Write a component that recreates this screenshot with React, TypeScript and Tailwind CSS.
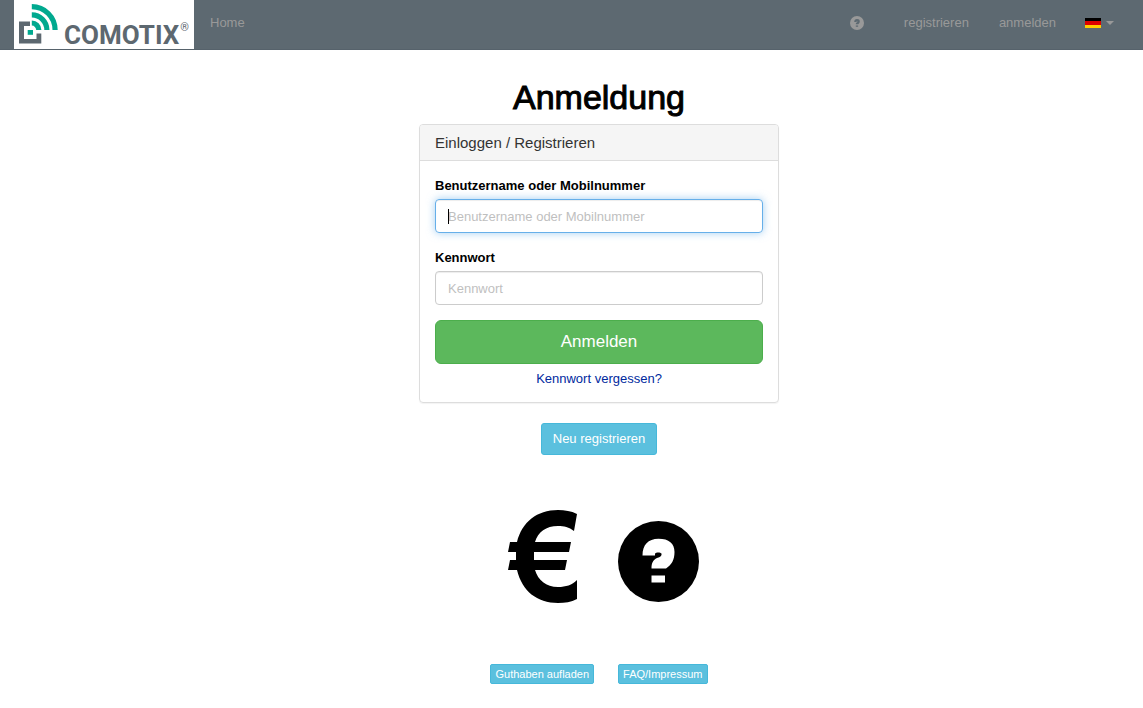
import type { ReactNode } from 'react';

function QuestionIcon({ className, mark }: { className: string; mark: string }) {
  return (
    <svg viewBox="0 0 81 81" className={className} aria-hidden="true">
      <circle cx="40.5" cy="40.5" r="40.5" fill="currentColor" />
      <path
        fill={mark}
        d="M24.500 34.500C24.500 24 30 17.800 40.500 17.800C51 17.800 56.500 22.500 56.500 31C56.500 39 53.500 44 48 47.500H33.500C33.500 42 35 39 39 37C42.500 36 44 34.500 43.500 32.500C42.500 31 38 31 37 32.500V34.500ZM33.500 54.500H47V61.500H33.500Z"
      />
    </svg>
  );
}

function EuroIcon() {
  return (
    <svg viewBox="0 0 69 93" className="h-[93px] w-[69px]" aria-hidden="true">
      <path d="M69 4L66 21C61 17 56 16 50 16C38 16 30 22 27 32H63L61 42H26V50H59L57 60H27C30 70 38 77 50 77C58 77 64 75 69 70V89C63 92 57 93 50 93C29 93 14 81 9 60H0L2 50H8V42H0L2 32H9C14 12 29 0 50 0C57 0 63 1 69 4Z" />
    </svg>
  );
}

function LogoMark() {
  return (
    <svg viewBox="0 0 40 40" className="h-10 w-10 shrink-0" aria-hidden="true">
      <path fill="#5d6870" d="M0 17.500H11V22H5V35H17.500V29.500H22.300V39.500H0Z" />
      <path fill="#00a98f" d="M8.700 26H14V30.800H8.700Z" />
      <g fill="none" stroke="#00a98f" strokeWidth="5.200">
        <path d="M12.800 2.700A23.300 23.300 0 0 1 36.100 26" />
        <path d="M12.800 10.900A15.100 15.100 0 0 1 27.900 26" />
        <path d="M12.800 19A7 7 0 0 1 19.800 26" />
      </g>
    </svg>
  );
}

function NavLink({ children }: { children: ReactNode }) {
  return (
    <a href="#" className="px-[15px] text-[#999]">
      {children}
    </a>
  );
}

const fieldClass =
  'block h-[34px] w-full rounded border px-3 text-[13px] outline-none placeholder:text-[#bfbfbf]';

export default function App() {
  return (
    <div className="min-h-screen bg-white font-['Liberation_Sans',Arial,sans-serif] text-[13px] leading-[18px] text-black">
      <nav className="flex h-[50px] items-start border-b border-[#56626b] bg-[#5d6971] pr-[14px] pl-[14px]">
        <a href="#" aria-label="Comotix" className="flex h-[49px] w-[180px] items-start bg-white pt-1 pl-[5px]">
          <LogoMark />
          <span className="mt-[15px] ml-[5px] font-[Roboto,sans-serif] text-[26px] leading-[32px] font-bold text-[#5d6870]">
            COMOTIX
          </span>
          <span className="mt-[14px] ml-px font-[Roboto,sans-serif] text-[11px] leading-[20px] text-[#5d6870]">®</span>
        </a>
        <div className="flex h-[46px] flex-1 items-center pl-px">
          <NavLink>Home</NavLink>
        </div>
        <div className="flex h-[46px] items-center">
          <a href="#" aria-label="Hilfe" className="px-[25px] text-[#999]">
            <QuestionIcon className="h-[14px] w-[14px]" mark="#5d6971" />
          </a>
          <NavLink>registrieren</NavLink>
          <NavLink>anmelden</NavLink>
          <button type="button" aria-label="Sprache" className="flex items-center gap-[5px] pr-[15px] pl-[14px]">
            <svg viewBox="0 0 16 10" className="h-[10px] w-4" aria-hidden="true">
              <path d="M0 0H16V3H0Z" />
              <path fill="#d00" d="M0 3H16V7H0Z" />
              <path fill="#ffce00" d="M0 7H16V10H0Z" />
            </svg>
            <svg viewBox="0 0 8 4" className="h-1 w-2" aria-hidden="true">
              <path fill="#999" d="M0 0H8L4 4Z" />
            </svg>
          </button>
        </div>
      </nav>

      <main className="flex flex-col items-center pt-7 pl-[55px]">
        <h1 className="text-[34px] leading-[38px] [-webkit-text-stroke:1px_#000]">Anmeldung</h1>
        <section className="mt-2 w-full max-w-[360px] rounded border border-[#ddd] shadow-[0_1px_1px_rgba(0,0,0,0.05)]">
          <h2 className="rounded-t-[3px] border-b border-[#ddd] bg-[#f5f5f5] px-[15px] py-2 text-[15px] leading-[19px] text-[#333]">
            Einloggen / Registrieren
          </h2>
          <form className="px-[15px] pt-4 pb-[14px]" onSubmit={(event) => event.preventDefault()}>
            <label htmlFor="username" className="block font-bold">
              Benutzername oder Mobilnummer
            </label>
            <div className="relative mt-1">
              <input
                id="username"
                type="text"
                autoFocus
                placeholder="Benutzername oder Mobilnummer"
                className={`${fieldClass} peer border-[#66afe9] caret-transparent shadow-[inset_0_1px_1px_rgba(0,0,0,0.075),0_0_8px_rgba(102,175,233,0.6)]`}
              />
              <span className="pointer-events-none absolute top-[10px] left-[13px] hidden h-[15px] w-px bg-black peer-placeholder-shown:block" />
            </div>
            <label htmlFor="password" className="mt-4 block font-bold">
              Kennwort
            </label>
            <input
              id="password"
              type="password"
              placeholder="Kennwort"
              className={`${fieldClass} mt-1 border-[#ccc] shadow-[inset_0_1px_1px_rgba(0,0,0,0.075)]`}
            />
            <button
              type="submit"
              className="mt-[15px] h-11 w-full rounded-md border border-[#4cae4c] bg-[#5cb85c] text-[17px] text-white"
            >
              Anmelden
            </button>
            <a href="#" className="mt-1.5 block text-center text-[#002a9e]">
              Kennwort vergessen?
            </a>
          </form>
        </section>

        <button
          type="button"
          className="mt-5 h-8 rounded-[3px] border border-[#46b8da] bg-[#5bc0de] px-[11px] text-white"
        >
          Neu registrieren
        </button>

        <div className="mt-[55px] flex gap-6">
          <div className="flex flex-col items-end">
            <div className="flex h-[93px] items-center pr-[17px]">
              <EuroIcon />
            </div>
            <button
              type="button"
              className="mt-[61px] h-5 rounded-[2px] border border-[#46b8da] bg-[#5bc0de] px-1 text-[11px] leading-4 text-white"
            >
              Guthaben aufladen
            </button>
          </div>
          <div className="flex flex-col items-start">
            <div className="flex h-[93px] items-end pb-px">
              <QuestionIcon className="h-[81px] w-[81px]" mark="#fff" />
            </div>
            <button
              type="button"
              className="mt-[61px] h-5 rounded-[2px] border border-[#46b8da] bg-[#5bc0de] px-1 text-[11px] leading-4 text-white"
            >
              FAQ/Impressum
            </button>
          </div>
        </div>
      </main>
    </div>
  );
}
